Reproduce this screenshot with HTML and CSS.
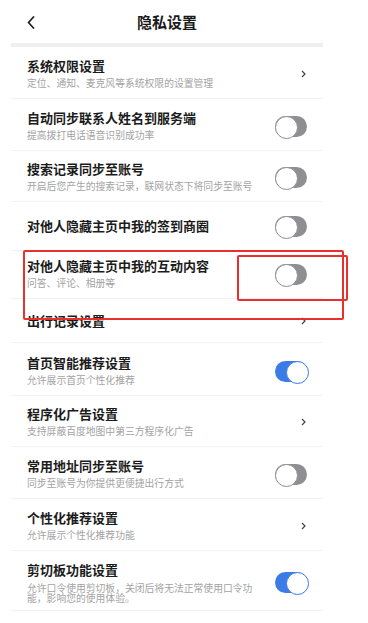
FILE: index.html
```html
<!DOCTYPE html>
<html lang="zh">
<head>
<meta charset="utf-8">
<title>隐私设置</title>
<link rel="stylesheet" href="styles.css">
</head>
<body>
<div class="page">
  <header class="topbar">
    <svg class="back" width="8" height="13" viewBox="0 0 8 13"><path d="M6.5 1 L1.5 6.5 L6.5 12" fill="none" stroke="#222" stroke-width="1.8" stroke-linecap="round" stroke-linejoin="round"/></svg>
    <h1 class="title">隐私设置</h1>
  </header>
  <div class="band"></div>
  <ul class="list">
    <li class="row">
      <div class="text"><div class="name">系统权限设置</div><div class="sub">定位、通知、麦克风等系统权限的设置管理</div></div>
      <svg class="chev" width="5" height="8" viewBox="0 0 5 8"><path d="M1 1 L4 4 L1 7" fill="none" stroke="#444" stroke-width="1.2"/></svg>
    </li>
    <li class="row">
      <div class="text"><div class="name">自动同步联系人姓名到服务端</div><div class="sub">提高拨打电话语音识别成功率</div></div>
      <span class="switch"></span>
    </li>
    <li class="row row-s">
      <div class="text"><div class="name">搜索记录同步至账号</div><div class="sub">开启后您产生的搜索记录，联网状态下将同步至账号</div></div>
      <span class="switch"></span>
    </li>
    <li class="row row-single">
      <div class="text"><div class="name">对他人隐藏主页中我的签到商圈</div></div>
      <span class="switch"></span>
    </li>
    <li class="row row-compact">
      <div class="text"><div class="name">对他人隐藏主页中我的互动内容</div><div class="sub">问答、评论、相册等</div></div>
      <span class="switch"></span>
    </li>
    <li class="row row-short">
      <div class="text"><div class="name">出行记录设置</div></div>
      <svg class="chev" width="5" height="8" viewBox="0 0 5 8"><path d="M1 1 L4 4 L1 7" fill="none" stroke="#444" stroke-width="1.2"/></svg>
    </li>
    <li class="row row-l">
      <div class="text"><div class="name">首页智能推荐设置</div><div class="sub">允许展示首页个性化推荐</div></div>
      <span class="switch on"></span>
    </li>
    <li class="row row-s">
      <div class="text"><div class="name">程序化广告设置</div><div class="sub">支持屏蔽百度地图中第三方程序化广告</div></div>
      <svg class="chev" width="5" height="8" viewBox="0 0 5 8"><path d="M1 1 L4 4 L1 7" fill="none" stroke="#444" stroke-width="1.2"/></svg>
    </li>
    <li class="row">
      <div class="text"><div class="name">常用地址同步至账号</div><div class="sub">同步至账号为你提供更便捷出行方式</div></div>
      <span class="switch"></span>
    </li>
    <li class="row">
      <div class="text"><div class="name">个性化推荐设置</div><div class="sub">允许展示个性化推荐功能</div></div>
      <svg class="chev" width="5" height="8" viewBox="0 0 5 8"><path d="M1 1 L4 4 L1 7" fill="none" stroke="#444" stroke-width="1.2"/></svg>
    </li>
    <li class="row row-multi">
      <div class="text"><div class="name">剪切板功能设置</div><div class="sub">允许口令使用剪切板，关闭后将无法正常使用口令功能，影响您的使用体验。</div></div>
      <span class="switch on"></span>
    </li>
  </ul>
  <div class="mark mark-outer"></div>
  <div class="mark mark-inner"></div>
</div>
</body>
</html>
```

FILE: styles.css
```css
* { box-sizing: border-box; margin: 0; padding: 0; }
html, body { background: #fff; }
body {
  font-family: "Noto Sans CJK SC", "Noto Sans", sans-serif;
  color: #1a1a1a;
  overflow: hidden;
}
.page {
  position: relative;
  width: 312px;
  margin-left: 11px;
}
.topbar {
  height: 43px;
  display: flex;
  align-items: center;
  justify-content: center;
  position: relative;
}
.back {
  position: absolute;
  left: 16px;
  top: 16px;
}
.title {
  font-size: 15px;
  font-weight: 700;
  line-height: 20px;
  margin-top: 1px;
}
.band {
  height: 4px;
  background: #efefef;
}
.list { list-style: none; }
.row {
  display: flex;
  align-items: center;
  padding: 11px 16px 8px 16px;
  border-bottom: 1px solid #f2f2f2;
}
.row-s { padding-top: 10px; }
.row-l { padding-top: 12px; }
.row-single { height: 49px; padding-top: 0; padding-bottom: 0; }
.row-compact { padding-top: 7px; }
.row-short { height: 44px; padding-top: 0; padding-bottom: 0; }
.row-multi { padding-bottom: 7px; }
.text { flex: 1; min-width: 0; }
.name {
  font-size: 13px;
  font-weight: 700;
  line-height: 16px;
  color: #1c1c1c;
}
.sub {
  font-size: 9.8px;
  line-height: 13px;
  margin-top: 3px;
  color: #a3a3a3;
}
.row-multi .sub { line-height: 10px; margin-top: 5px; max-width: 232px; }
.chev { flex: none; margin-right: 1px; }
.switch {
  flex: none;
  position: relative;
  width: 32px;
  height: 21px;
  border-radius: 11px;
  background: #8e8e93;
}
.switch::after {
  content: "";
  position: absolute;
  left: 0;
  top: 0;
  width: 21px;
  height: 21px;
  border-radius: 50%;
  background: #fff;
  border: 1.5px solid #8e8e93;
}
.switch.on { background: #3a7be8; }
.switch.on::after { left: 11px; border-color: #3a7be8; }
.mark {
  position: absolute;
  border: 2px solid #e8302c;
  border-radius: 2px;
}
.mark-outer { left: 12px; top: 250px; width: 321px; height: 70px; }
.mark-inner { left: 226px; top: 255px; width: 111px; height: 46px; }
```
